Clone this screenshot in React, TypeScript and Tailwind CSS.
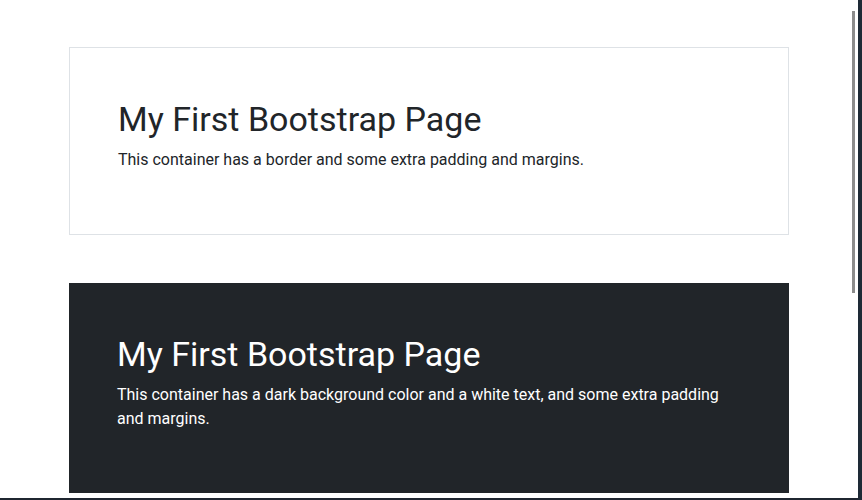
export default function App() {
  return (
    <div className="flex h-[500px] w-[862px] overflow-hidden bg-white font-['Roboto',sans-serif] text-[#212529]">
      <div className="relative flex-1 border-b-2 border-[#1f2630]">
        <div className="mx-auto w-[720px]">
          <section className="mt-[47px] border border-[#dee2e6] px-12 pt-[50px] pb-[46px]">
            <h1 className="mb-2 text-[34px] leading-[42px]">My First Bootstrap Page</h1>
            <p className="mb-4 text-base leading-6">This container has a border and some extra padding and margins.</p>
          </section>

          <section className="mt-12 bg-[#212529] px-12 pt-[50px] pb-[46px] text-white">
            <h1 className="mb-2 text-[34px] leading-[42px]">My First Bootstrap Page</h1>
            <p className="mb-4 text-base leading-6">
              This container has a dark background color and a white text, and some extra padding and margins.
            </p>
          </section>
        </div>

        {/* overlay scrollbar thumb */}
        <div className="absolute right-[3px] top-[11px] h-[282px] w-[3px] bg-[#8c8c8c]" />
      </div>
      <div className="w-1 bg-[#1e2a36]" />
    </div>
  );
}
